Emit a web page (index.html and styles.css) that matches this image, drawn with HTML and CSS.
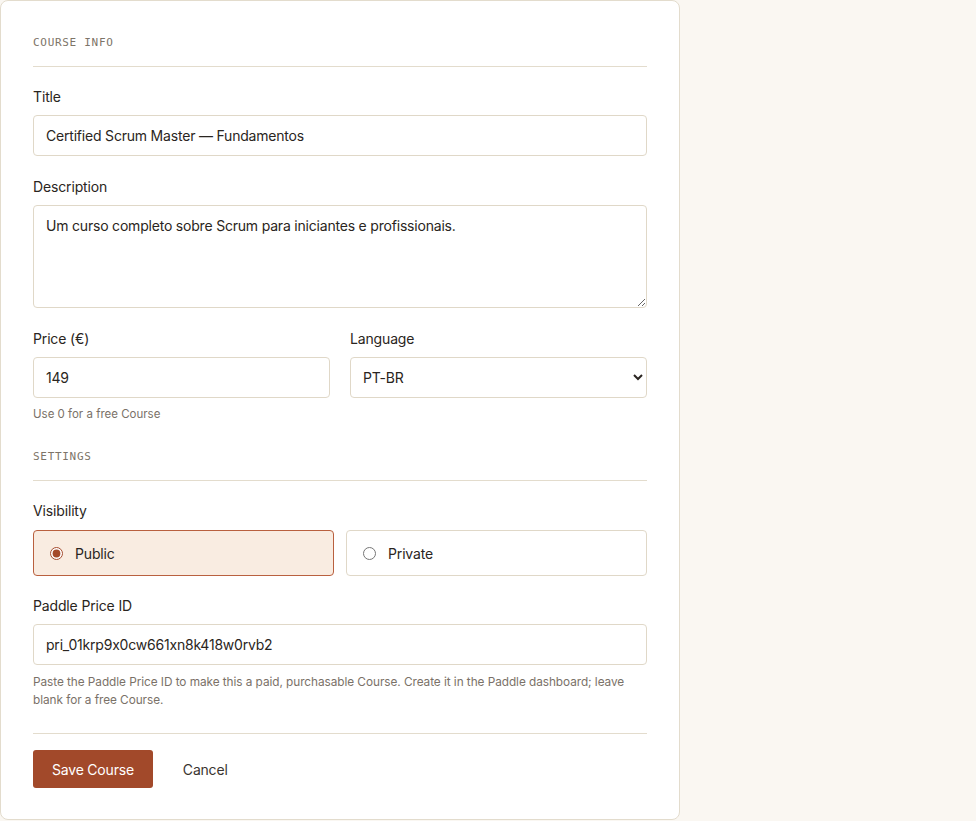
FILE: index.html
```html
<!DOCTYPE html>
<html lang="en">
<head>
    <meta charset="UTF-8">
    <meta name="viewport" content="width=device-width, initial-scale=1.0">
    <title>Edit Course</title>
    <link rel="stylesheet" href="styles.css">
</head>
<body>

    <form class="card">
        <div class="section-title">Course info</div>

        <div class="field">
            <label for="title">Title</label>
            <input type="text" id="title" value="Certified Scrum Master — Fundamentos">
        </div>

        <div class="field">
            <label for="description">Description</label>
            <textarea id="description">Um curso completo sobre Scrum para iniciantes e profissionais.</textarea>
        </div>

        <div class="row">
            <div class="field">
                <label for="price">Price (€)</label>
                <input type="text" id="price" value="149">
                <div class="hint">Use 0 for a free Course</div>
            </div>
            <div class="field">
                <label for="language">Language</label>
                <select id="language">
                    <option>PT-BR</option>
                    <option>EN</option>
                    <option>ES</option>
                </select>
            </div>
        </div>

        <div class="section-title">Settings</div>

        <div class="field visibility">
            <label>Visibility</label>
            <div class="choices">
                <label class="choice selected"><input type="radio" name="visibility" value="public" checked> Public</label>
                <label class="choice"><input type="radio" name="visibility" value="private"> Private</label>
            </div>
        </div>

        <div class="field">
            <label for="paddle">Paddle Price ID</label>
            <input type="text" id="paddle" value="pri_01krp9x0cw661xn8k418w0rvb2">
            <div class="hint long">Paste the Paddle Price ID to make this a paid, purchasable Course. Create it in the Paddle dashboard; leave blank for a free Course.</div>
        </div>

        <div class="actions">
            <button type="button" class="btn-primary">Save Course</button>
            <button type="button" class="btn-link">Cancel</button>
        </div>
    </form>

</body>
</html>
```

FILE: styles.css
```css
body {
    margin: 0;
    background: #faf7f2;
    font-family: Inter, "Noto Sans", sans-serif;
    font-feature-settings: "calt" 0;
    color: #2a2521;
}
.card {
    box-sizing: border-box;
    width: 680px;
    background: #fff;
    border: 1px solid #e3dccd;
    border-radius: 8px;
    padding: 32px 32px 31px;
}
.section-title {
    font-family: "DejaVu Sans Mono", "Liberation Mono", monospace;
    font-size: 11px;
    line-height: 18px;
    letter-spacing: 0.7px;
    text-transform: uppercase;
    color: #7d7468;
    padding-top: 1px;
    padding-bottom: 14px;
    border-bottom: 1px solid #e3dccd;
    margin-bottom: 19px;
}
.row + .section-title {
    margin-top: 25px;
}
.field {
    margin-bottom: 20px;
}
.field > label {
    display: block;
    font-size: 14px;
    line-height: 21px;
    margin-bottom: 8px;
    color: #2a2521;
    letter-spacing: -0.15px;
}
.visibility {
    margin-bottom: 19px;
}
.visibility > label {
    margin-bottom: 9px;
}
input[type="text"], textarea, select {
    box-sizing: border-box;
    width: 100%;
    font-family: inherit;
    font-feature-settings: "calt" 0;
    font-size: 14px;
    letter-spacing: -0.2px;
    color: #2a2521;
    background: #fff;
    border: 1px solid #e0d8c8;
    border-radius: 4px;
    padding: 10px 12px;
    line-height: 19px;
    height: 41px;
    display: block;
}
textarea {
    height: 103px;
    resize: vertical;
}
select {
    padding: 0 8px;
}
.row {
    display: grid;
    grid-template-columns: 1fr 1fr;
    gap: 20px;
}
.row .field {
    margin-bottom: 0;
}
.hint {
    font-size: 11.5px;
    line-height: 16px;
    color: #7a7168;
    margin-top: 8px;
}
.hint.long {
    font-size: 11.8px;
    line-height: 18px;
    letter-spacing: -0.05px;
    margin-top: 8px;
}
.choices {
    display: grid;
    grid-template-columns: 1fr 1fr;
    gap: 12px;
}
.choice {
    display: flex;
    align-items: center;
    gap: 12px;
    height: 46px;
    box-sizing: border-box;
    padding: 0 16px;
    border: 1px solid #e0d8c8;
    border-radius: 4px;
    font-size: 14px;
    letter-spacing: -0.15px;
    cursor: pointer;
}
.choice input {
    margin: 0;
    width: 13px;
    height: 13px;
    accent-color: #a4492a;
}
.choice.selected {
    background: #f9ece1;
    border-color: #b9603f;
}
.actions {
    border-top: 1px solid #e3dccd;
    margin-top: 24px;
    padding-top: 16px;
    display: flex;
    align-items: center;
    gap: 12px;
}
.btn-primary {
    font-family: inherit;
    font-size: 14px;
    letter-spacing: -0.2px;
    height: 38px;
    padding: 0 19px;
    background: #a2492a;
    color: #fff;
    border: none;
    border-radius: 3px;
    cursor: pointer;
}
.btn-link {
    font-family: inherit;
    font-size: 14px;
    letter-spacing: -0.2px;
    height: 38px;
    padding: 0 18px;
    background: none;
    border: none;
    color: #3a342f;
    cursor: pointer;
}
```
